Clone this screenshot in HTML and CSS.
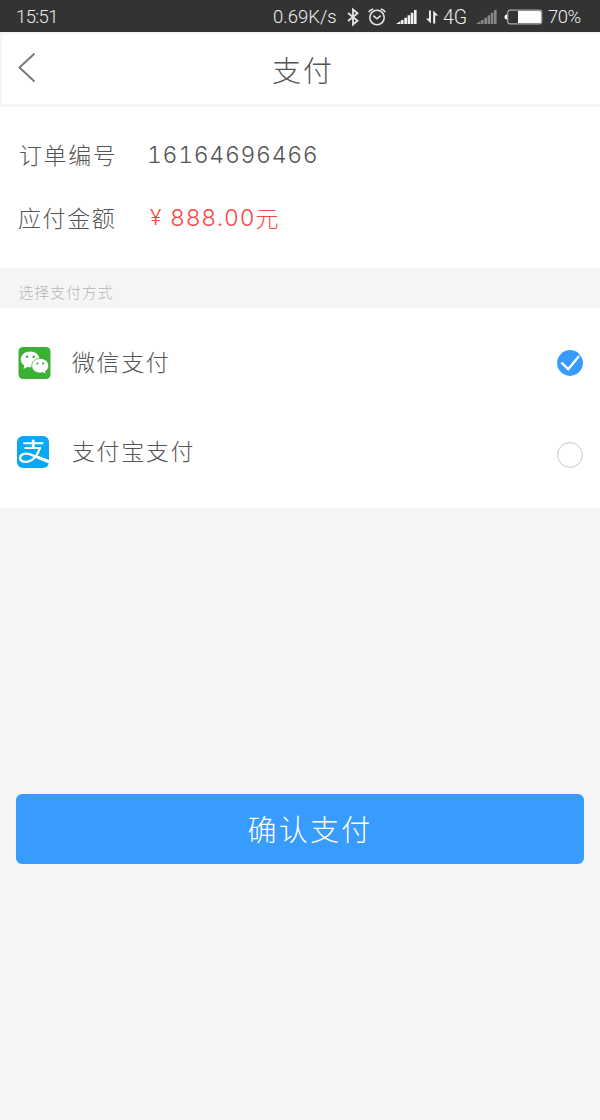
FILE: index.html
```html
<!DOCTYPE html>
<html lang="zh-CN">
<head>
<meta charset="utf-8">
<title>支付</title>
<link rel="stylesheet" href="styles.css">
</head>
<body>
<div class="statusbar">
  <span class="time">15:51</span>
  <span class="speed">0.69K/s</span>
  <svg class="bluetooth" width="14" height="20" viewBox="0 0 14 20"><path d="M2 6l9.500 7.800L7 17.500V2.500l4.500 3.700L2 14" fill="none" stroke="#e4e4e4" stroke-width="1.800"/></svg>
  <svg class="alarm" width="18" height="20" viewBox="0 0 18 20"><g fill="none" stroke="#e4e4e4" stroke-width="1.600"><circle cx="9" cy="10.500" r="7.200"/><path d="M5.300 8.700L9 11.800l3.700-3.100M.7 5.200Q2.200 2.500 5.200 2M17.300 5.200Q15.800 2.500 12.800 2"/></g></svg>
  <svg class="signal" width="21" height="16" viewBox="0 0 21 16"><path d="M0 15l4.500-3V15zM5 11h2.500v4H5zM8.300 8.800H11V15H8.300zM11.600 6.300h2.600V15h-2.600zM14.800 3.800h2.600V15h-2.600zM18 1h2.600v14H18z" fill="#f2f2f2"/></svg>
  <svg class="transfer" width="15" height="16" viewBox="0 0 15 16"><path d="M4 1.500h1.900V14.500L1 9.500h3zM8.200 1.500l5 5h-3v8H8.200z" fill="#f0f0f0"/></svg>
  <span class="network">4G</span>
  <svg class="signal2" width="21" height="16" viewBox="0 0 21 16"><path d="M0 15l4.500-3V15zM5 11h2.500v4H5zM8.300 8.800H11V15H8.300zM11.600 6.300h2.600V15h-2.600zM14.800 3.800h2.600V15h-2.600zM18 1h2.600v14H18z" fill="#858585"/></svg>
  <svg class="battery" width="39" height="16" viewBox="0 0 39 16"><path d="M3 5.500Q.5 5.500.5 8T3 10.500z" fill="#fff"/><rect x="3.700" y="1.200" width="34" height="13.600" rx="2.200" fill="none" stroke="#aaa" stroke-width="1.200"/><path d="M14 2h21.500q1.500 0 1.500 1.500v9q0 1.500-1.500 1.500H14z" fill="#fff"/></svg>
  <span class="percent">70%</span>
</div>
<header class="navbar">
  <svg class="back" width="20" height="32" viewBox="0 0 20 32"><path d="M16.500 1.500L1.500 15.500L16.500 29.500" fill="none" stroke="#777" stroke-width="1.900"/></svg>
  <h1 class="title">支付</h1>
</header>
<section class="order">
  <div class="row"><span class="label indent">订单编号</span><span class="number">16164696466</span></div>
  <div class="row"><span class="label">应付金额</span><span class="amount"><span class="yen">¥</span><span class="value">888.00</span><span class="unit">元</span></span></div>
</section>
<div class="section-title">选择支付方式</div>
<section class="methods">
  <div class="method">
    <svg class="logo" width="34" height="34" viewBox="0 0 34 34"><rect x="1.500" y="1" width="32" height="32" rx="4.500" fill="#3cb034"/><path d="M13.200 5.500c-5.200 0-9.400 3.500-9.400 7.900 0 2.500 1.300 4.600 3.500 6.100l-.8 3.500 3.800-2.100c1 .3 1.900.4 2.900.4 5.200 0 9.400-3.500 9.400-7.900s-4.200-7.900-9.400-7.900z" fill="#fff"/><path d="M23.200 12.400c-4.700 0-8.500 3.200-8.500 7.300s3.800 7.300 8.500 7.300c.9 0 1.800-.1 2.600-.4l3.200 1.800-.7-2.900c2.100-1.300 3.400-3.400 3.400-5.800 0-4.100-3.800-7.300-8.500-7.300z" fill="#fff" stroke="#3cb034" stroke-width=".8"/><g fill="#3cb034"><circle cx="10" cy="10.800" r="1.300"/><circle cx="16.700" cy="10.800" r="1.300"/><circle cx="20.400" cy="17.500" r="1.100"/><circle cx="26" cy="17.500" r="1.100"/></g></svg>
    <span class="name">微信支付</span>
    <svg class="check" width="28" height="28" viewBox="0 0 28 28"><circle cx="14" cy="14" r="12.900" fill="#389bfe"/><path d="M6 14.200l6.200 6L22.500 7.700" fill="none" stroke="#fff" stroke-width="2.300" stroke-linecap="round"/></svg>
  </div>
  <div class="method alipay">
    <svg class="logo" width="34" height="34" viewBox="0 0 34 34"><rect x="1" y="1" width="32" height="32" rx="6" fill="#06a8f5"/><g fill="none" stroke="#fff"><path d="M7.200 8.300h20.100M8.500 13h16.500" stroke-width="2"/><path d="M17.200 4.700V13" stroke-width="2.800"/><path d="M23.800 13c-1.600 6-5.800 12.500-12 13.700-4.200.8-7.900-.6-7.700-4 .1-3 3.800-4.600 8-3.800 5.300 1 11.500 5.200 20.500 7.200" stroke-width="2.300"/></g><path d="M20 20l13 5v3.600l-12-5z" fill="#fff"/></svg>
    <span class="name">支付宝支付</span>
    <svg class="check empty" width="28" height="28" viewBox="0 0 28 28"><circle cx="14" cy="14" r="12.400" fill="#fff" stroke="#c6c6c6" stroke-width="1"/></svg>
  </div>
</section>
<button class="confirm">确认支付</button>
</body>
</html>
```
FILE: styles.css
```css
* { box-sizing: border-box; }
body {
  margin: 0;
  min-height: 1120px;
  background: #f5f5f5;
  color: #555;
  font-family: "Noto Sans CJK SC", sans-serif;
  font-weight: 300;
}
svg { display: block; flex: none; }
.statusbar {
  display: flex;
  align-items: center;
  height: 32px;
  padding: 2px 0 0 16px;
  background: #333;
  color: #ececec;
  font-family: Roboto, sans-serif;
  font-size: 18.500px;
  font-weight: 350;
  line-height: 31px;
  white-space: nowrap;
}
.time { width: 257px; letter-spacing: -.6px; }
.speed { width: 73px; }
.alarm { margin-left: 8px; }
.signal { margin-left: 10px; }
.transfer { margin-left: 8px; }
.network { width: 28px; margin-left: 3px; font-size: 19.500px; }
.signal2 { margin-left: 5px; }
.battery { margin-left: 7px; }
.percent { margin-left: 5px; letter-spacing: -.5px; }
.navbar {
  display: flex;
  align-items: flex-start;
  height: 75px;
  padding: 18px 0 0 16px;
  background: #fff;
  border: 2px solid #f5f5f5;
  border-width: 2px 0 3px 2px;
}
.title {
  margin: -1px 0 0 234px;
  font-size: 29px;
  font-weight: 300;
  line-height: 36px;
  letter-spacing: 2px;
}
.order {
  height: 161px;
  padding: 31px 0 0 18px;
  background: #fff;
}
.row {
  display: flex;
  height: 63px;
  font-size: 23px;
  line-height: 32px;
}
.label { width: 129px; letter-spacing: 1.600px; }
.indent { padding-left: 1px; }
.number, .value {
  padding-top: 1px;
  font-family: Inter, sans-serif;
  font-size: 23px;
  letter-spacing: .7px;
  font-variant-numeric: tabular-nums;
}
.amount { display: flex; color: #fb4545; }
.value { letter-spacing: .8px; }
.yen { width: 23px; padding: 1px 0 0 3px; font-family: Inter, sans-serif; font-size: 21px; }
.section-title {
  height: 40px;
  padding: 9px 0 0 18.500px;
  color: #b5b5b5;
  font-size: 15px;
  line-height: 30px;
  letter-spacing: .8px;
}
.methods { height: 200px; padding-top: 37px; background: #fff; }
.method {
  display: flex;
  align-items: center;
  height: 36px;
  padding: 0 16px 0 17px;
}
.name {
  flex: 1;
  margin: -4px 0 0 21px;
  font-size: 23px;
  line-height: 34px;
  letter-spacing: 1.600px;
}
.check { margin-top: -1px; }
.alipay { margin-top: 53px; }
.alipay .logo { margin-left: -1px; }
.alipay .name { margin-left: 22px; }
.empty { margin-top: 6px; }
.confirm {
  display: block;
  width: 568px;
  height: 70px;
  margin: 286px 0 0 16px;
  padding: 0 0 1px 20px;
  border: 0;
  border-radius: 6px;
  background: #389bfe;
  color: #fff;
  font: 300 29px/69px "Noto Sans CJK SC", sans-serif;
  letter-spacing: 2.200px;
}
```
